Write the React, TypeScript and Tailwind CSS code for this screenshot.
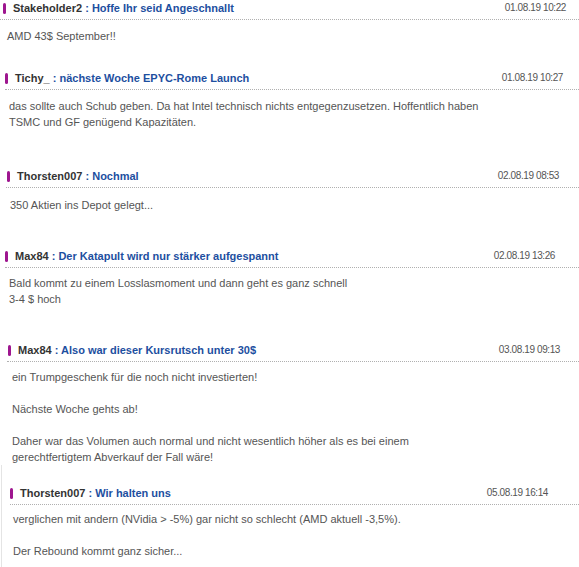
import React from 'react';

type Post = {
  id: number;
  user: string;
  title: string;
  date: string;
  body: string[][];
  indent: string;
  barMl: string;
  bodyPl: string;
  bodyPt: string;
  datePad: string;
  gap: string;
};

const posts: Post[] = [
  {
    id: 1,
    user: 'Stakeholder2',
    title: 'Hoffe Ihr seid Angeschnallt',
    date: '01.08.19 10:22',
    body: [['AMD 43$ September!!']],
    indent: 'pl-0',
    barMl: 'ml-[3px]',
    bodyPl: 'pl-[7px]',
    bodyPt: 'pt-[8px]',
    datePad: 'pr-[13px]',
    gap: 'mb-[26px]',
  },
  {
    id: 2,
    user: 'Tichy_',
    title: 'nächste Woche EPYC-Rome Launch',
    date: '01.08.19 10:27',
    body: [[
      'das sollte auch Schub geben. Da hat Intel technisch nichts entgegenzusetzen. Hoffentlich haben',
      'TSMC und GF genügend Kapazitäten.',
    ]],
    indent: 'pl-[5px]',
    barMl: 'ml-0',
    bodyPl: 'pl-[4px]',
    bodyPt: 'pt-[8px]',
    datePad: 'pr-[16px]',
    gap: 'mb-[38px]',
  },
  {
    id: 3,
    user: 'Thorsten007',
    title: 'Nochmal',
    date: '02.08.19 08:53',
    body: [['350 Aktien ins Depot gelegt...']],
    indent: 'pl-[6px]',
    barMl: 'ml-[1px]',
    bodyPl: 'pl-[4px]',
    bodyPt: 'pt-[9px]',
    datePad: 'pr-[20px]',
    gap: 'mb-[35px]',
  },
  {
    id: 4,
    user: 'Max84',
    title: 'Der Katapult wird nur stärker aufgespannt',
    date: '02.08.19 13:26',
    body: [['Bald kommt zu einem Losslasmoment und dann geht es ganz schnell', '3-4 $ hoch']],
    indent: 'pl-[5px]',
    barMl: 'ml-0',
    bodyPl: 'pl-[4px]',
    bodyPt: 'pt-[7px]',
    datePad: 'pr-[24px]',
    gap: 'mb-[35px]',
  },
  {
    id: 5,
    user: 'Max84',
    title: 'Also war dieser Kursrutsch unter 30$',
    date: '03.08.19 09:13',
    body: [
      ['ein Trumpgeschenk für die noch nicht investierten!'],
      ['Nächste Woche gehts ab!'],
      [
        'Daher war das Volumen auch normal und nicht wesentlich höher als es bei einem',
        'gerechtfertigtem Abverkauf der Fall wäre!',
      ],
    ],
    indent: 'pl-[7px]',
    barMl: 'ml-[1px]',
    bodyPl: 'pl-[5px]',
    bodyPt: 'pt-[7px]',
    datePad: 'pr-[19px]',
    gap: 'mb-0',
  },
  {
    id: 6,
    user: 'Thorsten007',
    title: 'Wir halten uns',
    date: '05.08.19 16:14',
    body: [
      ['verglichen mit andern (NVidia > -5%) gar nicht so schlecht (AMD aktuell -3,5%).'],
      ['Der Rebound kommt ganz sicher...'],
    ],
    indent: 'pl-[8px]',
    barMl: 'ml-0',
    bodyPl: 'pl-[3px]',
    bodyPt: 'pt-[6px]',
    datePad: 'pr-[31px]',
    gap: 'mb-0',
  },
];

const PostItem: React.FC<{ post: Post }> = ({ post }) => (
  <div className={`${post.indent} ${post.gap}`}>
    <div
      className={`flex items-center justify-between pt-[1px] pb-[4px] border-b border-dotted border-[#b0b0b0] ${post.datePad}`}
    >
      <div className="flex items-center text-[11px] leading-[14px] font-bold">
        <span className={`inline-block w-[3px] h-[11px] rounded-[2px] bg-[#9e168f] mr-[7px] ${post.barMl}`} />
        <span className="text-[#333333]">{post.user}</span>
        <span className="text-[#1d4f9f] whitespace-pre"> : {post.title}</span>
      </div>
      <span className="text-[10px] leading-[14px] tracking-[-0.4px] text-[#555555]">{post.date}</span>
    </div>
    <div className={`${post.bodyPt} ${post.bodyPl} pr-[10px] text-[11px] leading-[16px] text-[#555555] flex flex-col gap-[16px]`}>
      {post.body.map((para, i) => (
        <p key={i}>
          {para.map((line, j) => (
            <React.Fragment key={j}>
              {j > 0 && <br />}
              {line}
            </React.Fragment>
          ))}
        </p>
      ))}
    </div>
  </div>
);

export default function App() {
  const first = posts.slice(0, 5);
  const last = posts[5];
  return (
    <div className="w-[579px] h-[567px] overflow-hidden bg-white font-['Liberation_Sans',Arial,sans-serif]">
      {first.map((p) => (
        <PostItem key={p.id} post={p} />
      ))}
      <div className="ml-[1px] border-l border-[#e4e4e4] pt-[20px] pb-[40px]">
        <PostItem post={last} />
      </div>
    </div>
  );
}
